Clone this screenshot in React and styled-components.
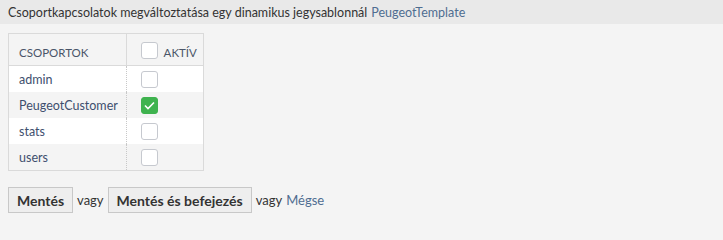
import React from "react";
import styled, { createGlobalStyle } from "styled-components";

const Global = createGlobalStyle`
  html, body { margin: 0; padding: 0; background: #f4f4f4; overflow: hidden; }
  body { font-family: "Lato", "Liberation Sans", sans-serif; font-size: 12.5px; color: #333; }
`;

const Page = styled.div`
  width: 723px;
  height: 222px;
  background: #f4f4f4;
  overflow: hidden;
`;

const Header = styled.div`
  height: 24px;
  background: #e9e9e9;
  display: flex;
  align-items: center;
  padding: 0 8px;
  font-size: 12.5px;
  color: #333;
`;

const Link = styled.a`
  color: #4f6d91;
  text-decoration: none;
  margin-left: 4px;
`;

const Body = styled.div`
  padding: 9px 8px 0;
`;

const Table = styled.table`
  border-collapse: collapse;
  border: 1px solid #dadada;
  table-layout: fixed;
  width: 196px;
`;

const HeadCell = styled.th`
  height: 32px;
  background: #f4f4f4;
  border-right: 1px solid #dadada;
  border-bottom: 1px solid #dadada;
  vertical-align: bottom;
  text-align: left;
  padding: 0 2px 6px 10px;
  font-weight: normal;
  font-size: 11.5px;
  text-transform: uppercase;
  color: #4a5568;
  width: ${(p) => p.$w}px;
  box-sizing: border-box;
  white-space: nowrap;
  &:last-child { border-right: none; }
`;

const HeadInner = styled.div`
  display: flex;
  align-items: flex-end;
  gap: 6px;
  line-height: 12px;
`;

const Row = styled.tr`
  background: ${(p) => (p.$alt ? "#f4f4f4" : "#ffffff")};
`;

const Cell = styled.td`
  height: 26px;
  padding: 0 10px;
  font-size: 12.5px;
  color: #3e4f6e;
  border-right: 1px dotted #c8c8c8;
  white-space: nowrap;
  &:last-child { border-right: none; padding-left: 14px; }
`;

const Box = styled.span`
  display: inline-block;
  flex-shrink: 0;
  box-sizing: border-box;
  width: 17px;
  height: 17px;
  border-radius: 3px;
  border: 1px solid ${(p) => (p.$checked ? "#3fb34f" : "#c6c9cf")};
  background: ${(p) => (p.$checked ? "#3fb34f" : "#fff")};
  vertical-align: middle;
  position: relative;
`;

const Check = styled.svg`
  position: absolute;
  left: 2px;
  top: 3px;
`;

const HeadBox = styled(Box)`
  margin-left: 4px;
`;

const Actions = styled.div`
  display: flex;
  align-items: center;
  margin-top: 16px;
  gap: 4px;
  font-size: 13px;
  color: #333;
`;

const Button = styled.button`
  height: 26px;
  box-sizing: border-box;
  border: 1px solid #c8c8c8;
  background: #eeeeee;
  font-family: inherit;
  font-size: 14px;
  font-weight: bold;
  color: #333;
  padding: 0 8px;
  cursor: pointer;
`;

const CancelLink = styled.a`
  color: #4f6d91;
  text-decoration: none;
`;

const rows = [
  { name: "admin", checked: false },
  { name: "PeugeotCustomer", checked: true },
  { name: "stats", checked: false },
  { name: "users", checked: false },
];

export default function App() {
  return (
    <Page>
      <Global />
      <Header>
        Csoportkapcsolatok megváltoztatása egy dinamikus jegysablonnál
        <Link href="#">PeugeotTemplate</Link>
      </Header>
      <Body>
        <Table>
          <thead>
            <tr>
              <HeadCell $w={117}>Csoportok</HeadCell>
              <HeadCell $w={77}>
                <HeadInner>
                  <HeadBox />
                  <span>Aktív</span>
                </HeadInner>
              </HeadCell>
            </tr>
          </thead>
          <tbody>
            {rows.map((r, i) => (
              <Row key={r.name} $alt={i % 2 === 1}>
                <Cell>{r.name}</Cell>
                <Cell>
                  <Box $checked={r.checked}>
                    {r.checked && (
                      <Check width="11" height="9" viewBox="0 0 11 9">
                        <path d="M1 4.5 L4 7.5 L10 1.5" fill="none" stroke="#fff" strokeWidth="1.6" />
                      </Check>
                    )}
                  </Box>
                </Cell>
              </Row>
            ))}
          </tbody>
        </Table>
        <Actions>
          <Button>Mentés</Button>
          <span>vagy</span>
          <Button>Mentés és befejezés</Button>
          <span>vagy</span>
          <CancelLink href="#">Mégse</CancelLink>
        </Actions>
      </Body>
    </Page>
  );
}
